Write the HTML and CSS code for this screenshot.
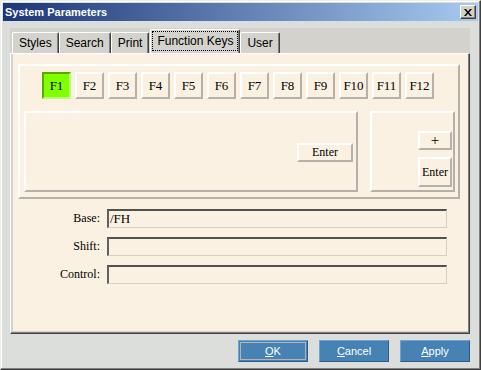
FILE: index.html
```html
<!DOCTYPE html>
<html lang="en">
<head>
    <meta charset="UTF-8">
    <meta name="viewport" content="width=device-width, initial-scale=1.0">
    <link rel="stylesheet" href="styles.css">
</head>
<body>

<div class="window">
    <div class="titlebar">
        <span class="title">System Parameters</span>
        <button class="close-btn">
            <svg width="8" height="7" viewBox="0 0 8 7">
                <path d="M0 0h2l2 2.5L6 0h2L5 3.5 8 7H6L4 4.5 2 7H0l3-3.5z" fill="#000"/>
            </svg>
        </button>
    </div>

    <div class="body">
        <div class="tabstrip">
            <div class="tab">Styles</div>
            <div class="tab">Search</div>
            <div class="tab">Print</div>
            <div class="tab selected"><span class="focus">Function Keys</span></div>
            <div class="tab">User</div>
        </div>

        <div class="panel">
            <div class="groupbox">
                <div class="fkeys">
                    <button class="key active">F1</button>
                    <button class="key">F2</button>
                    <button class="key">F3</button>
                    <button class="key">F4</button>
                    <button class="key">F5</button>
                    <button class="key">F6</button>
                    <button class="key">F7</button>
                    <button class="key">F8</button>
                    <button class="key">F9</button>
                    <button class="key">F10</button>
                    <button class="key">F11</button>
                    <button class="key">F12</button>
                </div>
                <div class="subboxes">
                    <div class="subbox left-box">
                        <button class="key enter-wide">Enter</button>
                    </div>
                    <div class="subbox right-box">
                        <button class="key small">+</button>
                        <button class="key tall">Enter</button>
                    </div>
                </div>
            </div>

            <div class="fields">
                <div class="field-row">
                    <label class="field-label">Base:</label>
                    <div class="field-input">/FH</div>
                </div>
                <div class="field-row">
                    <label class="field-label">Shift:</label>
                    <div class="field-input"></div>
                </div>
                <div class="field-row">
                    <label class="field-label">Control:</label>
                    <div class="field-input"></div>
                </div>
            </div>
        </div>

        <div class="actions">
            <button class="action-btn default"><u>O</u>K</button>
            <button class="action-btn"><u>C</u>ancel</button>
            <button class="action-btn"><u>A</u>pply</button>
        </div>
    </div>
</div>

</body>
</html>
```

FILE: styles.css
```css
body {
    margin: 0;
    padding: 0;
    font-family: "Liberation Sans", Arial, sans-serif;
}

.window {
    width: 481px;
    height: 370px;
    box-sizing: border-box;
    display: flex;
    flex-direction: column;
    padding: 2px;
    background-color: #dcdedb;
    border: 1px solid;
    border-color: #eeeeea #404040 #404040 #eeeeea;
    box-shadow: inset -1px -1px #808080, inset 1px 1px #ffffff;
}

.titlebar {
    height: 18px;
    display: flex;
    align-items: center;
    justify-content: space-between;
    padding: 0 2px;
    background: linear-gradient(to right, #1c3678, #a6caf0);
}

.title {
    color: #fff;
    font-size: 11px;
    font-weight: 700;
}

.close-btn {
    width: 16px;
    height: 14px;
    padding: 0;
    display: flex;
    align-items: center;
    justify-content: center;
    background-color: #d4d0c8;
    border: 1px solid;
    border-color: #ffffff #404040 #404040 #ffffff;
    box-shadow: inset -1px -1px #808080;
}

.body {
    flex: 1;
    display: flex;
    flex-direction: column;
    padding: 7px 8px 0 7px;
}

/* tabs */
.tabstrip {
    height: 25px;
    display: flex;
    align-items: flex-end;
    padding-left: 2px;
    background-color: #d4d2cc;
}

.tab {
    height: 21px;
    box-sizing: border-box;
    padding: 0 6px;
    display: flex;
    align-items: center;
    font-size: 12px;
    color: #000;
    background-color: #d4d2cc;
    border-top: 1px solid #ffffff;
    border-left: 1px solid #ffffff;
    border-right: 1px solid #404040;
    border-radius: 2px 2px 0 0;
    box-shadow: inset -1px 0 #808080;
}

.tab.selected {
    height: 24px;
    padding: 1px 1px 2px 1px;
    margin-left: 1px;
}

.focus {
    height: 100%;
    display: flex;
    align-items: center;
    padding: 0 4px;
    box-sizing: border-box;
    border: 1px dotted #000;
}

/* main panel */
.panel {
    height: 281px;
    box-sizing: border-box;
    background-color: #fbf1e3;
    border-top: 1px solid #ffffff;
    border-left: 1px solid #ffffff;
    border-right: 1px solid #404040;
    border-bottom: 1px solid #404040;
    box-shadow: inset -1px -1px #808080, inset 2px 0 #d4d2cc, inset 0 -2px #d4d2cc;
}

.groupbox {
    margin: 10px 9px 0 7px;
    padding: 6px 0 5px 0;
    border: 2px solid;
    border-color: #ffffff #b5b1a9 #b5b1a9 #ffffff;
}

.fkeys {
    display: flex;
    gap: 4px;
    padding-left: 22px;
}

.key {
    width: 29px;
    height: 27px;
    padding: 0;
    font-family: "Liberation Serif", "Times New Roman", serif;
    font-size: 13px;
    color: #000;
    background-color: #fbf1e3;
    border: 2px solid;
    border-color: #ffffff #b5b1a9 #b5b1a9 #ffffff;
}

.key.active {
    background-color: #80ff00;
    border-color: #5ca800 #b8ff70 #b8ff70 #5ca800;
}

.subboxes {
    display: flex;
    gap: 12px;
    margin-top: 12px;
    padding: 0 3px 0 4px;
}

.subbox {
    height: 81px;
    box-sizing: border-box;
    display: flex;
    border: 2px solid;
    border-color: #ffffff #b5b1a9 #b5b1a9 #ffffff;
}

.left-box {
    width: 334px;
    justify-content: flex-end;
    align-items: flex-start;
    padding: 30px 3px 0 0;
}

.right-box {
    width: 85px;
    flex-direction: column;
    align-items: flex-end;
    gap: 7px;
    padding: 18px 1px 0 0;
}

.key.enter-wide {
    width: 56px;
    height: 19px;
    font-size: 12px;
}

.key.small {
    width: 34px;
    height: 19px;
    font-size: 15px;
    line-height: 1;
}

.key.tall {
    width: 34px;
    height: 30px;
    font-size: 12px;
}

/* fields */
.fields {
    display: flex;
    flex-direction: column;
    gap: 9px;
    margin-top: 10px;
}

.field-row {
    display: flex;
    align-items: center;
    gap: 7px;
}

.field-label {
    width: 89px;
    text-align: right;
    font-family: "Liberation Serif", "Times New Roman", serif;
    font-size: 12px;
}

.field-input {
    width: 340px;
    height: 19px;
    box-sizing: border-box;
    padding-left: 1px;
    font-family: "Liberation Serif", "Times New Roman", serif;
    font-size: 13px;
    line-height: 16px;
    background-color: #fbf1e3;
    border-top: 2px solid #505050;
    border-left: 2px solid #606060;
    border-right: 1px solid #d4d0c8;
    border-bottom: 1px solid #d4d0c8;
}

/* bottom buttons */
.actions {
    display: flex;
    justify-content: flex-end;
    gap: 11px;
    margin-top: 6px;
}

.action-btn {
    width: 70px;
    height: 22px;
    padding: 0;
    font-family: "Liberation Sans", Arial, sans-serif;
    font-size: 11px;
    color: #fff;
    background-color: #4682b4;
    border: 1px solid;
    border-color: #6fa3d3 #2d5c8c #2d5c8c #6fa3d3;
}

.action-btn.default {
    outline: 1px solid #b4b4b4;
    outline-offset: -3px;
}
```
